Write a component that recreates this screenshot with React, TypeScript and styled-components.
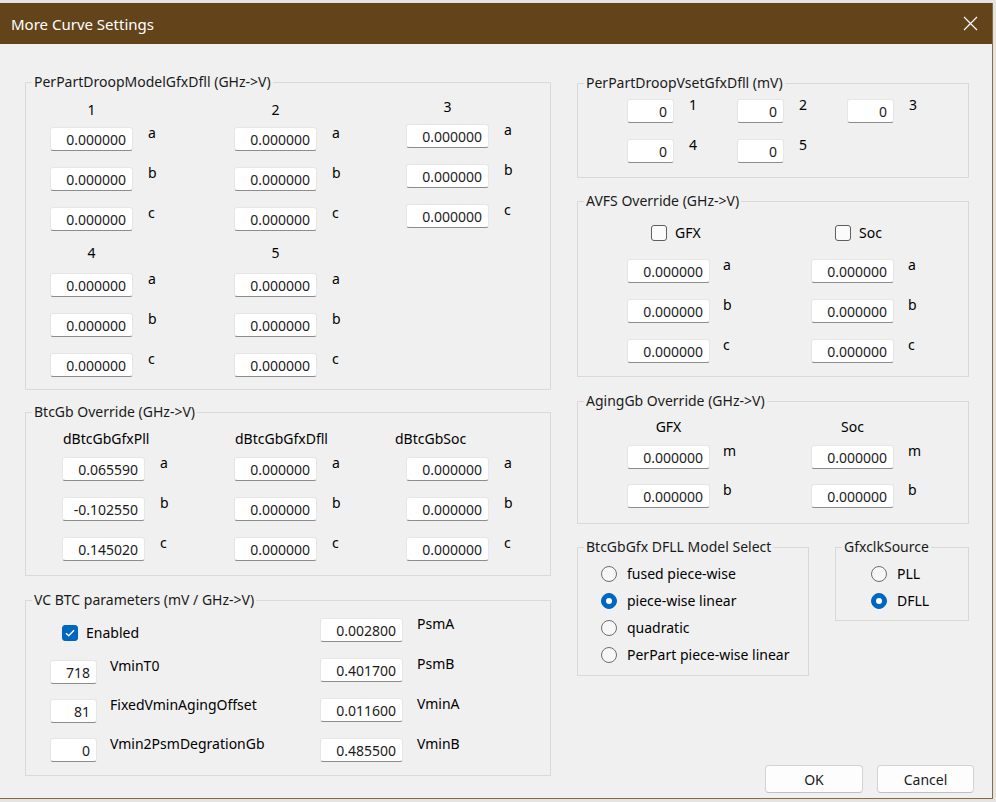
import React from "react";
import styled, { createGlobalStyle } from "styled-components";

const GlobalStyle = createGlobalStyle`
  body {
    margin: 0;
    background: #e4e4e4;
  }
`;

const Window = styled.div`
  margin-top: 3px;
  width: 992px;
  height: 795px;
  display: flex;
  flex-direction: column;
  background: #f0f0f0;
  border-right: 1px solid #8a6b3c;
  border-bottom: 1px solid #8a6b3c;
  font-family: "Noto Sans", "Open Sans", sans-serif;
  font-size: 14px;
  color: #000;
`;

const TitleBar = styled.div`
  height: 41px;
  flex: 0 0 41px;
  display: flex;
  align-items: center;
  justify-content: space-between;
  padding: 0 14px 0 11px;
  background: #63441a;
  color: #fff;
  font-size: 15px;
`;

const Body = styled.div`
  flex: 1;
  display: flex;
  gap: 26px;
  padding: 0 0 5px 25px;
`;

const Column = styled.div<{ $w: number; $pt: number }>`
  width: ${p => p.$w}px;
  padding-top: ${p => p.$pt}px;
  display: flex;
  flex-direction: column;
`;

const Group = styled.fieldset<{ $w?: number; $mt?: number }>`
  margin: ${p => p.$mt ?? 0}px 0 0 0;
  padding: 0;
  border: 1px solid #d9d9d9;
  min-width: 0;
  box-sizing: border-box;
  width: ${p => (p.$w ? `${p.$w}px` : "auto")};
`;

const Legend = styled.legend`
  margin-left: 6px;
  padding: 0 2px;
  line-height: 16px;
  color: #1a1a1a;
`;

const Inner = styled.div<{ $pad: string }>`
  padding: ${p => p.$pad};
`;

const Grid = styled.div<{ $cols: string; $mt?: number }>`
  display: grid;
  grid-template-columns: ${p => p.$cols};
  align-items: start;
  margin-top: ${p => p.$mt ?? 0}px;
`;

const Stack = styled.div<{ $gap: number; $lift?: number; $pt?: number }>`
  display: flex;
  flex-direction: column;
  gap: ${p => p.$gap}px;
  margin-top: ${p => -(p.$lift ?? 0)}px;
  padding-top: ${p => p.$pt ?? 0}px;
`;

const Head = styled.div<{ $w: number; $align?: string; $dx?: number; $mb: number }>`
  width: ${p => p.$w}px;
  height: 16px;
  line-height: 16px;
  margin-bottom: ${p => p.$mb}px;
  margin-left: ${p => p.$dx ?? 0}px;
  text-align: ${p => p.$align ?? "center"};
  white-space: nowrap;
`;

const FieldRow = styled.div`
  display: flex;
  align-items: flex-start;
  height: 24px;
`;

const TextBox = styled.input<{ $w: number }>`
  width: ${p => p.$w}px;
  height: 24px;
  box-sizing: border-box;
  margin: 0;
  padding: 0 6px 0 4px;
  border: 1px solid #e6e6e6;
  border-bottom-color: #8c8c8c;
  border-radius: 3px;
  background: #fff;
  font-family: inherit;
  font-size: 14px;
  color: #1b1b1b;
  text-align: right;
  outline: none;
`;

const Tag = styled.span<{ $gap?: number }>`
  margin-left: ${p => p.$gap ?? 14}px;
  margin-top: -2px;
  line-height: 16px;
  white-space: nowrap;
`;

const CheckRow = styled.label<{ $ml?: number }>`
  display: flex;
  align-items: center;
  gap: 8px;
  height: 16px;
  margin-left: ${p => p.$ml ?? 0}px;
  line-height: 16px;
`;

const Box = styled.span<{ $on?: boolean }>`
  width: 16px;
  height: 16px;
  box-sizing: border-box;
  border-radius: 3px;
  display: flex;
  align-items: center;
  justify-content: center;
  background: ${p => (p.$on ? "#0067c0" : "#fbfbfb")};
  border: 1px solid ${p => (p.$on ? "#0067c0" : "#5f5f5f")};
`;

const Dot = styled.span<{ $on?: boolean }>`
  width: 16px;
  height: 16px;
  flex: 0 0 16px;
  box-sizing: border-box;
  border-radius: 50%;
  background: ${p => (p.$on ? "#0067c0" : "#f7f7f7")};
  border: 1px solid ${p => (p.$on ? "#0067c0" : "#6e6e6e")};
  display: flex;
  align-items: center;
  justify-content: center;

  &::after {
    content: "";
    display: ${p => (p.$on ? "block" : "none")};
    width: 6px;
    height: 6px;
    border-radius: 50%;
    background: #fff;
  }
`;

const RadioRow = styled.label`
  display: flex;
  align-items: center;
  gap: 10px;
  height: 16px;
  line-height: 16px;
  white-space: nowrap;
`;

const SplitRow = styled.div`
  display: flex;
  align-items: flex-start;
  gap: 26px;
  margin-top: 15px;
`;

const Footer = styled.div`
  margin-top: auto;
  margin-right: -5px;
  display: flex;
  justify-content: flex-end;
  gap: 14px;
`;

const Button = styled.button<{ $w: number }>`
  width: ${p => p.$w}px;
  height: 28px;
  margin: 0;
  padding: 0;
  background: #fdfdfd;
  border: 1px solid #d3d3d3;
  border-bottom-color: #c0c0c0;
  border-radius: 4px;
  font-family: inherit;
  font-size: 14px;
  color: #1b1b1b;
`;

const Check = ({ on, label, ml }: { on?: boolean; label: string; ml?: number }) => (
  <CheckRow $ml={ml}>
    <Box $on={on}>
      {on && (
        <svg width="10" height="8" viewBox="0 0 10 8">
          <path d="M1 4.2 L3.7 6.8 L9 1.2" fill="none" stroke="#fff" strokeWidth="1.4" />
        </svg>
      )}
    </Box>
    {label}
  </CheckRow>
);

const Radio = ({ on, label }: { on?: boolean; label: string }) => (
  <RadioRow>
    <Dot $on={on} />
    {label}
  </RadioRow>
);

interface FieldProps {
  value: string;
  tag: string;
  w?: number;
  gap?: number;
}

const Field = ({ value, tag, w = 83, gap }: FieldProps) => (
  <FieldRow>
    <TextBox $w={w} defaultValue={value} readOnly />
    <Tag $gap={gap}>{tag}</Tag>
  </FieldRow>
);

interface CoefProps {
  title: string;
  values: string[];
  tags?: string[];
  lift?: number;
  align?: string;
  dx?: number;
  gap?: number;
  rowGap?: number;
  headGap?: number;
}

const Coef = ({
  title,
  values,
  tags = ["a", "b", "c"],
  lift,
  align,
  dx,
  gap = 15,
  rowGap = 16,
  headGap = 10,
}: CoefProps) => (
  <Stack $gap={0} $lift={lift}>
    <Head $w={83} $align={align} $dx={dx} $mb={headGap}>{title}</Head>
    <Stack $gap={rowGap}>
      {values.map((v, i) => (
        <Field key={i} value={v} tag={tags[i]} gap={gap} />
      ))}
    </Stack>
  </Stack>
);

const zero = "0.000000";
const zeros = [zero, zero, zero];

const CloseIcon = () => (
  <svg width="15" height="15" viewBox="0 0 15 15">
    <path d="M1 1 L14 14 M14 1 L1 14" stroke="#fff" strokeWidth="1.2" fill="none" />
  </svg>
);

export default function App() {
  return (
    <>
      <GlobalStyle />
      <Window>
        <TitleBar>
          <span>More Curve Settings</span>
          <CloseIcon />
        </TitleBar>
        <Body>
          <Column $w={526} $pt={30}>
            <Group>
              <Legend>PerPartDroopModelGfxDfll (GHz-&gt;V)</Legend>
              <Inner $pad="12px 0 12px 24px">
                <Grid $cols="184px 172px 83px">
                  <Coef title="1" values={zeros} headGap={9} />
                  <Coef title="2" values={zeros} headGap={9} />
                  <Coef title="3" values={zeros} headGap={9} lift={3} />
                </Grid>
                <Grid $cols="184px 172px" $mt={14}>
                  <Coef title="4" values={zeros} headGap={12} />
                  <Coef title="5" values={zeros} headGap={12} />
                </Grid>
              </Inner>
            </Group>

            <Group $mt={14}>
              <Legend>BtcGb Override (GHz-&gt;V)</Legend>
              <Inner $pad="11px 0 14px 36px">
                <Grid $cols="172px 172px 83px">
                  <Coef title="dBtcGbGfxPll" align="left" dx={1} values={["0.065590", "-0.102550", "0.145020"]} />
                  <Coef title="dBtcGbGfxDfll" align="left" dx={1} values={zeros} />
                  <Coef title="dBtcGbSoc" align="left" dx={-11} values={zeros} />
                </Grid>
              </Inner>
            </Group>

            <Group $mt={16}>
              <Legend>VC BTC parameters (mV / GHz-&gt;V)</Legend>
              <Inner $pad="0 0 13px 24px">
                <Grid $cols="270px 1fr">
                  <Stack $gap={0} $pt={17}>
                    <Check on label="Enabled" ml={12} />
                    <Stack $gap={15} style={{ marginTop: 19 }}>
                      <Field w={47} gap={13} value="718" tag="VminT0" />
                      <Field w={47} gap={13} value="81" tag="FixedVminAgingOffset" />
                      <Field w={47} gap={13} value="0" tag="Vmin2PsmDegrationGb" />
                    </Stack>
                  </Stack>
                  <Stack $gap={16} $pt={10}>
                    <Field value="0.002800" tag="PsmA" />
                    <Field value="0.401700" tag="PsmB" />
                    <Field value="0.011600" tag="VminA" />
                    <Field value="0.485500" tag="VminB" />
                  </Stack>
                </Grid>
              </Inner>
            </Group>
          </Column>

          <Column $w={392} $pt={31}>
            <Group>
              <Legend>PerPartDroopVsetGfxDfll (mV)</Legend>
              <Inner $pad="8px 0 14px 49px">
                <Grid $cols="110px 110px 110px" style={{ rowGap: 16 }}>
                  {["1", "2", "3", "4", "5"].map(n => (
                    <Field key={n} w={47} gap={15} value="0" tag={n} />
                  ))}
                </Grid>
              </Inner>
            </Group>

            <Group $mt={15}>
              <Legend>AVFS Override (GHz-&gt;V)</Legend>
              <Inner $pad="16px 0 13px 49px">
                <Grid $cols="184px 1fr">
                  <Stack $gap={16}>
                    <Check label="GFX" ml={24} />
                    <Stack $gap={16} style={{ marginTop: 2 }}>
                      <Field gap={13} value={zero} tag="a" />
                      <Field gap={13} value={zero} tag="b" />
                      <Field gap={13} value={zero} tag="c" />
                    </Stack>
                  </Stack>
                  <Stack $gap={16}>
                    <Check label="Soc" ml={24} />
                    <Stack $gap={16} style={{ marginTop: 2 }}>
                      <Field value={zero} tag="a" />
                      <Field value={zero} tag="b" />
                      <Field value={zero} tag="c" />
                    </Stack>
                  </Stack>
                </Grid>
              </Inner>
            </Group>

            <Group $mt={16}>
              <Legend>AgingGb Override (GHz-&gt;V)</Legend>
              <Inner $pad="10px 0 15px 49px">
                <Grid $cols="184px 1fr">
                  <Coef title="GFX" values={[zero, zero]} tags={["m", "b"]} gap={13} rowGap={15} />
                  <Coef title="Soc" values={[zero, zero]} tags={["m", "b"]} gap={14} rowGap={15} />
                </Grid>
              </Inner>
            </Group>

            <SplitRow>
              <Group $w={232}>
                <Legend>BtcGbGfx DFLL Model Select</Legend>
                <Inner $pad="11px 0 12px 23px">
                  <Stack $gap={11}>
                    <Radio label="fused piece-wise" />
                    <Radio on label="piece-wise linear" />
                    <Radio label="quadratic" />
                    <Radio label="PerPart piece-wise linear" />
                  </Stack>
                </Inner>
              </Group>
              <Group $w={134}>
                <Legend>GfxclkSource</Legend>
                <Inner $pad="11px 0 11px 35px">
                  <Stack $gap={11}>
                    <Radio label="PLL" />
                    <Radio on label="DFLL" />
                  </Stack>
                </Inner>
              </Group>
            </SplitRow>

            <Footer>
              <Button $w={98}>OK</Button>
              <Button $w={97}>Cancel</Button>
            </Footer>
          </Column>
        </Body>
      </Window>
    </>
  );
}
